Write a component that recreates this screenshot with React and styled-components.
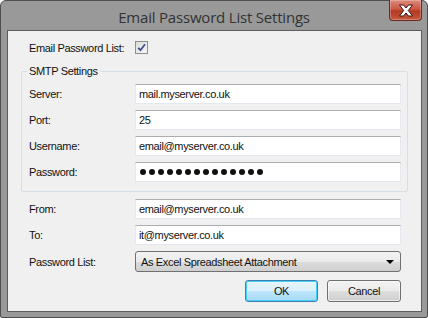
import React from 'react';
import styled, { createGlobalStyle } from 'styled-components';

const GlobalStyle = createGlobalStyle`
  html, body {
    margin: 0;
    padding: 0;
    background: #ffffff;
  }
  * {
    box-sizing: border-box;
  }
`;

const Window = styled.div`
  width: 428px;
  height: 318px;
  display: flex;
  flex-direction: column;
  background: #999999;
  border: 1px solid #4e4e4e;
  border-radius: 6px 6px 2px 2px;
  font-family: 'Liberation Sans', Arial, sans-serif;
  font-size: 11px;
  letter-spacing: -0.35px;
  color: #111;
`;

const TitleBar = styled.div`
  height: 29px;
  display: grid;
  grid-template-columns: 1fr auto 1fr;
  align-items: start;
`;

const Title = styled.div`
  padding-top: 6px;
  font-family: 'Open Sans', 'Noto Sans', sans-serif;
  font-size: 15px;
  font-weight: 400;
  color: #333;
  letter-spacing: -0.2px;
  white-space: nowrap;
`;

const CloseButton = styled.div`
  justify-self: end;
  margin-right: 5px;
  margin-top: -1px;
  width: 33px;
  height: 21px;
  display: flex;
  align-items: center;
  justify-content: center;
  background: linear-gradient(#dc8b7f 0%, #cc5843 45%, #b13a24 55%, #c5583f 100%);
  border: 1px solid #6b2a1f;
  border-top: none;
  border-radius: 0 0 4px 4px;
  box-shadow: inset 0 0 0 1px rgba(255, 255, 255, 0.25);
`;

const Client = styled.div`
  flex: 1;
  margin: 0 5px 5px 6px;
  background: #f0f0f0;
  border: 1px solid #5d5d5d;
  padding: 10px 13px 0 13px;
  display: flex;
  flex-direction: column;
`;

const Row = styled.div`
  display: grid;
  grid-template-columns: 106px 266px;
  align-items: center;
  height: ${(p) => p.$h || 20}px;
  margin-top: ${(p) => p.$mt || 0}px;
  padding-left: ${(p) => (p.$inset ? 0 : 8)}px;
`;

const Label = styled.span`
  white-space: nowrap;
`;

const Checkbox = styled.div`
  width: 13px;
  height: 13px;
  border: 1px solid #8f8f8f;
  background: linear-gradient(135deg, #dcdcdc, #f6f6f6);
  display: flex;
  align-items: center;
  justify-content: center;
`;

const Group = styled.div`
  margin-top: 17px;
  width: 387px;
  border: 1px solid #d5dfe5;
  border-radius: 2px;
  padding: 0 0 9px 7px;
`;

const Legend = styled.div`
  margin: -7px 0 0 -2px;
  padding: 0 2px;
  width: fit-content;
  height: 13px;
  line-height: 13px;
  background: #f0f0f0;
`;

const Field = styled.div`
  height: 20px;
  width: 266px;
  background: #fff;
  border: 1px solid #e3e9ef;
  border-top-color: #abadb3;
  padding: 0 3px;
  display: flex;
  align-items: center;
  white-space: nowrap;
  overflow: hidden;
`;

const Dots = styled.div`
  display: flex;
  gap: 3px;
  padding-left: 1px;
`;

const Dot = styled.span`
  width: 6px;
  height: 6px;
  border-radius: 50%;
  background: #111;
`;

const Select = styled.div`
  height: 21px;
  width: 266px;
  border: 1px solid #707070;
  border-radius: 3px;
  background: linear-gradient(#f2f2f2 0%, #ebebeb 50%, #dddddd 51%, #cfcfcf 100%);
  display: flex;
  align-items: center;
  justify-content: space-between;
  padding: 0 6px 0 5px;
  white-space: nowrap;
`;

const Arrow = styled.span`
  width: 0;
  height: 0;
  border-left: 4px solid transparent;
  border-right: 4px solid transparent;
  border-top: 4px solid #000;
`;

const Buttons = styled.div`
  display: flex;
  justify-content: flex-end;
  gap: 9px;
  margin-top: 8px;
  width: 380px;
`;

const Button = styled.div`
  width: ${(p) => p.$w}px;
  height: 22px;
  display: flex;
  align-items: center;
  justify-content: center;
  border: 1px solid ${(p) => (p.$default ? '#3c7fb1' : '#707070')};
  border-radius: 3px;
  background: ${(p) =>
    p.$default
      ? 'linear-gradient(#eaf6fd 0%, #d9f0fc 50%, #bee6fd 51%, #a7d9f5 100%)'
      : 'linear-gradient(#f2f2f2 0%, #ebebeb 50%, #dddddd 51%, #cfcfcf 100%)'};
  box-shadow: ${(p) => (p.$default ? 'inset 0 0 0 1px #48d1f8' : 'inset 0 0 0 1px rgba(255,255,255,0.6)')};
`;

const Password = ({ count }) => (
  <Dots>
    {Array.from({ length: count }).map((_, i) => (
      <Dot key={i} />
    ))}
  </Dots>
);

const TextRow = ({ label, value, children, mt, inset }) => (
  <Row $mt={mt} $inset={inset}>
    <Label>{label}</Label>
    <Field>{children || value}</Field>
  </Row>
);

const App = () => (
  <>
    <GlobalStyle />
    <Window>
      <TitleBar>
        <span />
        <Title>Email Password List Settings</Title>
        <CloseButton>
          <svg width="16" height="13" viewBox="0 0 16 13">
            <path
              d="M1.5 1 L5.5 1 L8 4 L10.5 1 L14.5 1 L10.3 6.5 L14.5 12 L10.5 12 L8 9 L5.5 12 L1.5 12 L5.7 6.5 Z"
              fill="#fff"
              stroke="#3b1510"
              strokeWidth="1"
              strokeLinejoin="round"
            />
          </svg>
        </CloseButton>
      </TitleBar>
      <Client>
        <Row $h={13}>
          <Label>Email Password List:</Label>
          <Checkbox>
            <svg width="9" height="9" viewBox="0 0 9 9">
              <path d="M1.2 4.8 L3.5 7.2 L8 1.2" fill="none" stroke="#3c4f8c" strokeWidth="1.8" />
            </svg>
          </Checkbox>
        </Row>
        <Group>
          <Legend>SMTP Settings</Legend>
          <TextRow inset mt={6} label="Server:" value="mail.myserver.co.uk" />
          <TextRow inset mt={6} label="Port:" value="25" />
          <TextRow inset mt={6} label="Username:" value="email@myserver.co.uk" />
          <TextRow inset mt={6} label="Password:">
            <Password count={14} />
          </TextRow>
        </Group>
        <TextRow mt={7} label="From:" value="email@myserver.co.uk" />
        <TextRow mt={6} label="To:" value="it@myserver.co.uk" />
        <Row $mt={6} $h={21}>
          <Label>Password List:</Label>
          <Select>
            <span>As Excel Spreadsheet Attachment</span>
            <Arrow />
          </Select>
        </Row>
        <Buttons>
          <Button $default $w={73}>OK</Button>
          <Button $w={74}>Cancel</Button>
        </Buttons>
      </Client>
    </Window>
  </>
);

export default App;
